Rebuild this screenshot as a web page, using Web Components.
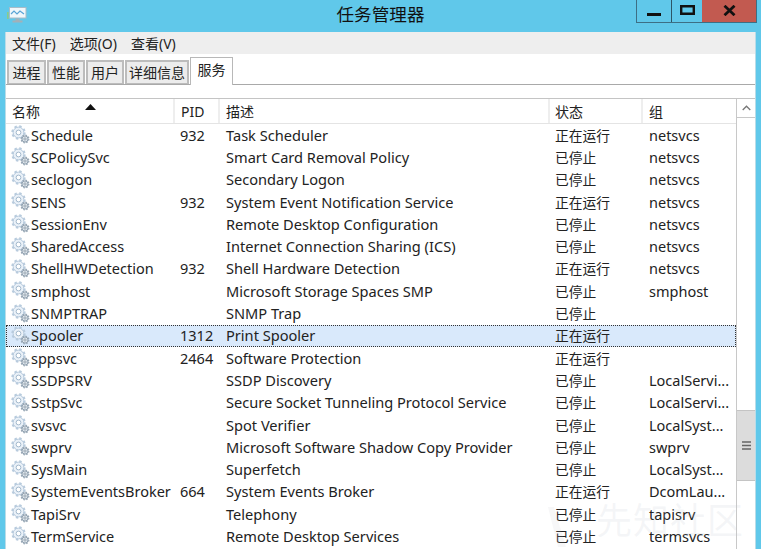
<!DOCTYPE html>
<html>
<head>
<meta charset="utf-8">
<style>
html, body { margin: 0; padding: 0; height: 100%; overflow: hidden; background: #60c8ea; }
body { font-family: "Noto Sans", "Noto Sans CJK SC", sans-serif; }
</style>
</head>
<body>
<task-window></task-window>

<script>
const FONT = '"Noto Sans", "Noto Sans CJK SC", sans-serif';

class TitleBar extends HTMLElement {
    constructor() {
        super();
        this.attachShadow({ mode: 'open' });
        this.shadowRoot.innerHTML = `
            <style>
            :host { display: block; height: 32px; position: relative; font-family: ${FONT}; }
            .bar { display: flex; height: 32px; }
            .icon { margin: 7px 0 0 7px; width: 20px; height: 17px; }
            .title { position: absolute; left: 0; right: 0; top: 2px; text-align: center; font-size: 17.6px; line-height: 24px; color: #111; }
            .buttons { margin-left: auto; margin-right: 4px; display: flex; height: 22px; border: 1px solid #3d6f85; border-top: 0; position: relative; }
            .btn { display: flex; align-items: center; justify-content: center; box-sizing: border-box; }
            .min { width: 35px; border-right: 1px solid #2c5566; }
            .max { width: 30px; }
            .close { width: 54px; background: #c25a50; }
            </style>
            <div class="bar">
                <svg class="icon" viewBox="0 0 20 17">
                    <rect x="0" y="5" width="1.6" height="7" fill="#8acb8a"/>
                    <rect x="2.5" y="0.5" width="16.5" height="10.5" fill="#f0f7fb" stroke="#a8bcc8"/>
                    <path d="M4 7l3-3 3 3 3-3 4 3" fill="none" stroke="#5aa4d6" stroke-width="1.2"/>
                    <path d="M8.5 11.5h4v2h3v2h-10v-2h3z" fill="#a3b0b8"/>
                </svg>
                <div class="title">任务管理器</div>
                <div class="buttons">
                    <div class="btn min"><svg width="14" height="14" viewBox="0 0 14 14"><rect x="0" y="9" width="14" height="3" fill="#111"/></svg></div>
                    <div class="btn max"><svg width="15" height="10" viewBox="0 0 15 10" style="margin-top:-3px"><path d="M1.2 1.2h12.6v7.6H1.2z" fill="none" stroke="#111" stroke-width="2.4"/></svg></div>
                    <div class="btn close"><svg width="13" height="11" viewBox="0 0 13 11" style="margin-top:-2px"><path d="M1.5 .8l10 9.4M11.5 .8l-10 9.4" stroke="#111" stroke-width="2.8" fill="none"/></svg></div>
                </div>
            </div>
        `;
    }
}
customElements.define('title-bar', TitleBar);

class MenuBar extends HTMLElement {
    constructor() {
        super();
        this.attachShadow({ mode: 'open' });
        this.shadowRoot.innerHTML = `
            <style>
            :host { display: flex; height: 22px; background: #eeeeee; gap: 14px; padding-left: 6px; align-items: center; font-family: ${FONT}; font-size: 14px; color: #222; }
            </style>
            <span>文件(F)</span><span>选项(O)</span><span>查看(V)</span>
        `;
    }
}
customElements.define('menu-bar', MenuBar);

class TabStrip extends HTMLElement {
    constructor() {
        super();
        this.attachShadow({ mode: 'open' });
        this.shadowRoot.innerHTML = `
            <style>
            :host { display: block; height: 31px; box-sizing: border-box; background: #fff; border-bottom: 1px solid #a9a9a9; font-family: ${FONT}; font-size: 14px; color: #222; }
            .tabs { display: flex; align-items: flex-start; padding: 3px 0 0 1px; }
            .tab { box-sizing: border-box; height: 24px; margin-top: 3px; border: 2px solid #bcbcbc; border-bottom: 1px solid #bcbcbc; background: #ececec; margin-right: 1px; padding-bottom: 2px; display: flex; align-items: center; justify-content: center; }
            .tab.active { background: #fff; height: 28px; margin-top: 0; margin-right: 0; position: relative; border: 1px solid #b8b8b8; border-bottom: 0; padding-bottom: 5px; }
            </style>
            <div class="tabs">
                <div class="tab" style="width:39px">进程</div>
                <div class="tab" style="width:38px">性能</div>
                <div class="tab" style="width:38px">用户</div>
                <div class="tab" style="width:64px">详细信息</div>
                <div class="tab active" style="width:43px">服务</div>
            </div>
        `;
    }
}
customElements.define('tab-strip', TabStrip);

class GearIcon extends HTMLElement {
    constructor() {
        super();
        this.attachShadow({ mode: 'open' });
        this.shadowRoot.innerHTML = `
            <style>
            :host { display: block; width: 19px; height: 19px; }
            svg { display: block; }
            </style>
            <svg width="19" height="19" viewBox="0 0 19 19">
                <circle cx="7.5" cy="7.5" r="5.4" fill="#eaf1f8" stroke="#b4c8dc" stroke-width="1"/>
                <circle cx="7.5" cy="7.5" r="6.2" fill="none" stroke="#b8cbdd" stroke-width="2" stroke-dasharray="2.4 2.47"/>
                <circle cx="7.5" cy="7.5" r="2.4" fill="#fff" stroke="#a2b8cc" stroke-width="1"/>
                <circle cx="14" cy="14" r="3.1" fill="#dfe6ec" stroke="#8d9dac" stroke-width="1"/>
                <circle cx="14" cy="14" r="3.8" fill="none" stroke="#98a8b6" stroke-width="1.3" stroke-dasharray="1.6 1.38"/>
                <circle cx="14" cy="14" r="1.1" fill="#fff" stroke="#7f90a0" stroke-width=".8"/>
            </svg>
        `;
    }
}
customElements.define('gear-icon', GearIcon);

const COLUMNS = '169px 45px 330px 93px 92px';

class ServiceRow extends HTMLElement {
    constructor() {
        super();
        this.attachShadow({ mode: 'open' });
    }
    connectedCallback() {
        const d = this.data;
        this.shadowRoot.innerHTML = `
            <style>
            :host { display: grid; grid-template-columns: ${COLUMNS}; height: 22.3px; box-sizing: border-box; padding-bottom: 1px; align-items: center; font-family: ${FONT}; font-size: 14.5px; color: #222; white-space: nowrap; }
            :host([selected]) { background: #d9e9fb; outline: 1px dotted #333; outline-offset: -1px; }
            .name { display: flex; align-items: center; gap: 1px; padding-left: 5px; }
            .cell { padding-left: 6px; overflow: hidden; }
            .pid { padding-left: 5px; }
            .desc { font-size: 14.6px; }
            .status { font-size: 13.75px; padding-left: 5px; }
            </style>
            <div class="name"><gear-icon></gear-icon><span>${d[0]}</span></div>
            <div class="cell pid">${d[1]}</div>
            <div class="cell desc">${d[2]}</div>
            <div class="cell status">${d[3]}</div>
            <div class="cell">${d[4]}</div>
        `;
    }
}
customElements.define('service-row', ServiceRow);

class ScrollBar extends HTMLElement {
    constructor() {
        super();
        this.attachShadow({ mode: 'open' });
        this.shadowRoot.innerHTML = `
            <style>
            :host { display: flex; flex-direction: column; width: 19px; box-sizing: border-box; border-left: 1px solid #c8c8c8; background: #fff; }
            .up { height: 18px; flex: none; display: flex; align-items: center; justify-content: center; border-bottom: 1px solid #c8c8c8; }
            .track { height: 292px; flex: none; }
            .thumb { height: 69px; flex: none; background: #dcdcdc; border-top: 1px solid #c4c4c4; border-bottom: 1px solid #c4c4c4; display: flex; align-items: center; justify-content: center; }
            </style>
            <div class="up"><svg width="9" height="6" viewBox="0 0 9 6"><path d="M.7 5L4.5 1.2 8.3 5" fill="none" stroke="#777" stroke-width="1.3"/></svg></div>
            <div class="track"></div>
            <div class="thumb"><svg width="9" height="9" viewBox="0 0 9 9"><path d="M0 1h9M0 4.5h9M0 8h9" stroke="#666" stroke-width="1.4"/></svg></div>
        `;
    }
}
customElements.define('scroll-bar', ScrollBar);

const SERVICES = [
    ['Schedule', '932', 'Task Scheduler', '正在运行', 'netsvcs'],
    ['SCPolicySvc', '', 'Smart Card Removal Policy', '已停止', 'netsvcs'],
    ['seclogon', '', 'Secondary Logon', '已停止', 'netsvcs'],
    ['SENS', '932', 'System Event Notification Service', '正在运行', 'netsvcs'],
    ['SessionEnv', '', 'Remote Desktop Configuration', '已停止', 'netsvcs'],
    ['SharedAccess', '', 'Internet Connection Sharing (ICS)', '已停止', 'netsvcs'],
    ['ShellHWDetection', '932', 'Shell Hardware Detection', '正在运行', 'netsvcs'],
    ['smphost', '', 'Microsoft Storage Spaces SMP', '已停止', 'smphost'],
    ['SNMPTRAP', '', 'SNMP Trap', '已停止', ''],
    ['Spooler', '1312', 'Print Spooler', '正在运行', ''],
    ['sppsvc', '2464', 'Software Protection', '正在运行', ''],
    ['SSDPSRV', '', 'SSDP Discovery', '已停止', 'LocalServi...'],
    ['SstpSvc', '', 'Secure Socket Tunneling Protocol Service', '已停止', 'LocalServi...'],
    ['svsvc', '', 'Spot Verifier', '已停止', 'LocalSyst...'],
    ['swprv', '', 'Microsoft Software Shadow Copy Provider', '已停止', 'swprv'],
    ['SysMain', '', 'Superfetch', '已停止', 'LocalSyst...'],
    ['SystemEventsBroker', '664', 'System Events Broker', '正在运行', 'DcomLau...'],
    ['TapiSrv', '', 'Telephony', '已停止', 'tapisrv'],
    ['TermService', '', 'Remote Desktop Services', '已停止', 'termsvcs'],
];

class ServiceTable extends HTMLElement {
    constructor() {
        super();
        this.attachShadow({ mode: 'open' });
        this.shadowRoot.innerHTML = `
            <style>
            :host { display: flex; flex: 1; min-height: 0; overflow: hidden; background: #fff; margin-top: 13px; border-top: 1px solid #c4c4c4; font-family: ${FONT}; font-size: 14px; color: #222; position: relative; }
            .main { flex: 1; min-width: 0; }
            .head { display: grid; grid-template-columns: ${COLUMNS}; height: 25px; box-sizing: border-box; border-bottom: 1px solid #e4e4e4; }
            .head div { border-right: 2px solid #eeeeee; padding: 0 0 0 6px; display: flex; align-items: center; position: relative; }
            .head div:nth-child(4) { padding-left: 5px; }
            .head div:last-child { border-right: 0; }
            .sort { position: absolute; left: 79px; top: 5px; }
            .mark { position: absolute; left: 590px; top: 398px; font-size: 36px; line-height: 48px; letter-spacing: 1px; color: rgba(190, 196, 204, .16); white-space: nowrap; }
            .logo { position: absolute; left: 540px; top: 408px; }
            </style>
            <div class="main">
                <div class="head">
                    <div>名称<svg class="sort" width="11" height="6" viewBox="0 0 11 6"><path d="M5.5 0L11 6H0z" fill="#111"/></svg></div>
                    <div>PID</div><div>描述</div><div>状态</div><div>组</div>
                </div>
                <div class="rows"></div>
            </div>
            <scroll-bar></scroll-bar>
            <svg class="logo" width="22" height="40" viewBox="0 0 22 40"><path d="M2 0h6L20 40H12z" fill="rgba(190,196,204,.13)"/></svg>
            <div class="mark">先知社区</div>
        `;
        const rows = this.shadowRoot.querySelector('.rows');
        SERVICES.forEach((s) => {
            const row = document.createElement('service-row');
            row.data = s;
            if (s[0] === 'Spooler') row.setAttribute('selected', '');
            rows.appendChild(row);
        });
    }
}
customElements.define('service-table', ServiceTable);

class TaskWindow extends HTMLElement {
    constructor() {
        super();
        this.attachShadow({ mode: 'open' });
        this.shadowRoot.innerHTML = `
            <style>
            :host { display: flex; flex-direction: column; height: 549px; background: #60c8ea; }
            .body { flex: 1; min-height: 0; display: flex; flex-direction: column; margin: 0 5px; background: #fff; border: solid #b9dce8; border-width: 0 1px; }
            </style>
            <title-bar></title-bar>
            <div class="body">
                <menu-bar></menu-bar>
                <tab-strip></tab-strip>
                <service-table></service-table>
            </div>
        `;
    }
}
customElements.define('task-window', TaskWindow);
</script>
</body>
</html>
